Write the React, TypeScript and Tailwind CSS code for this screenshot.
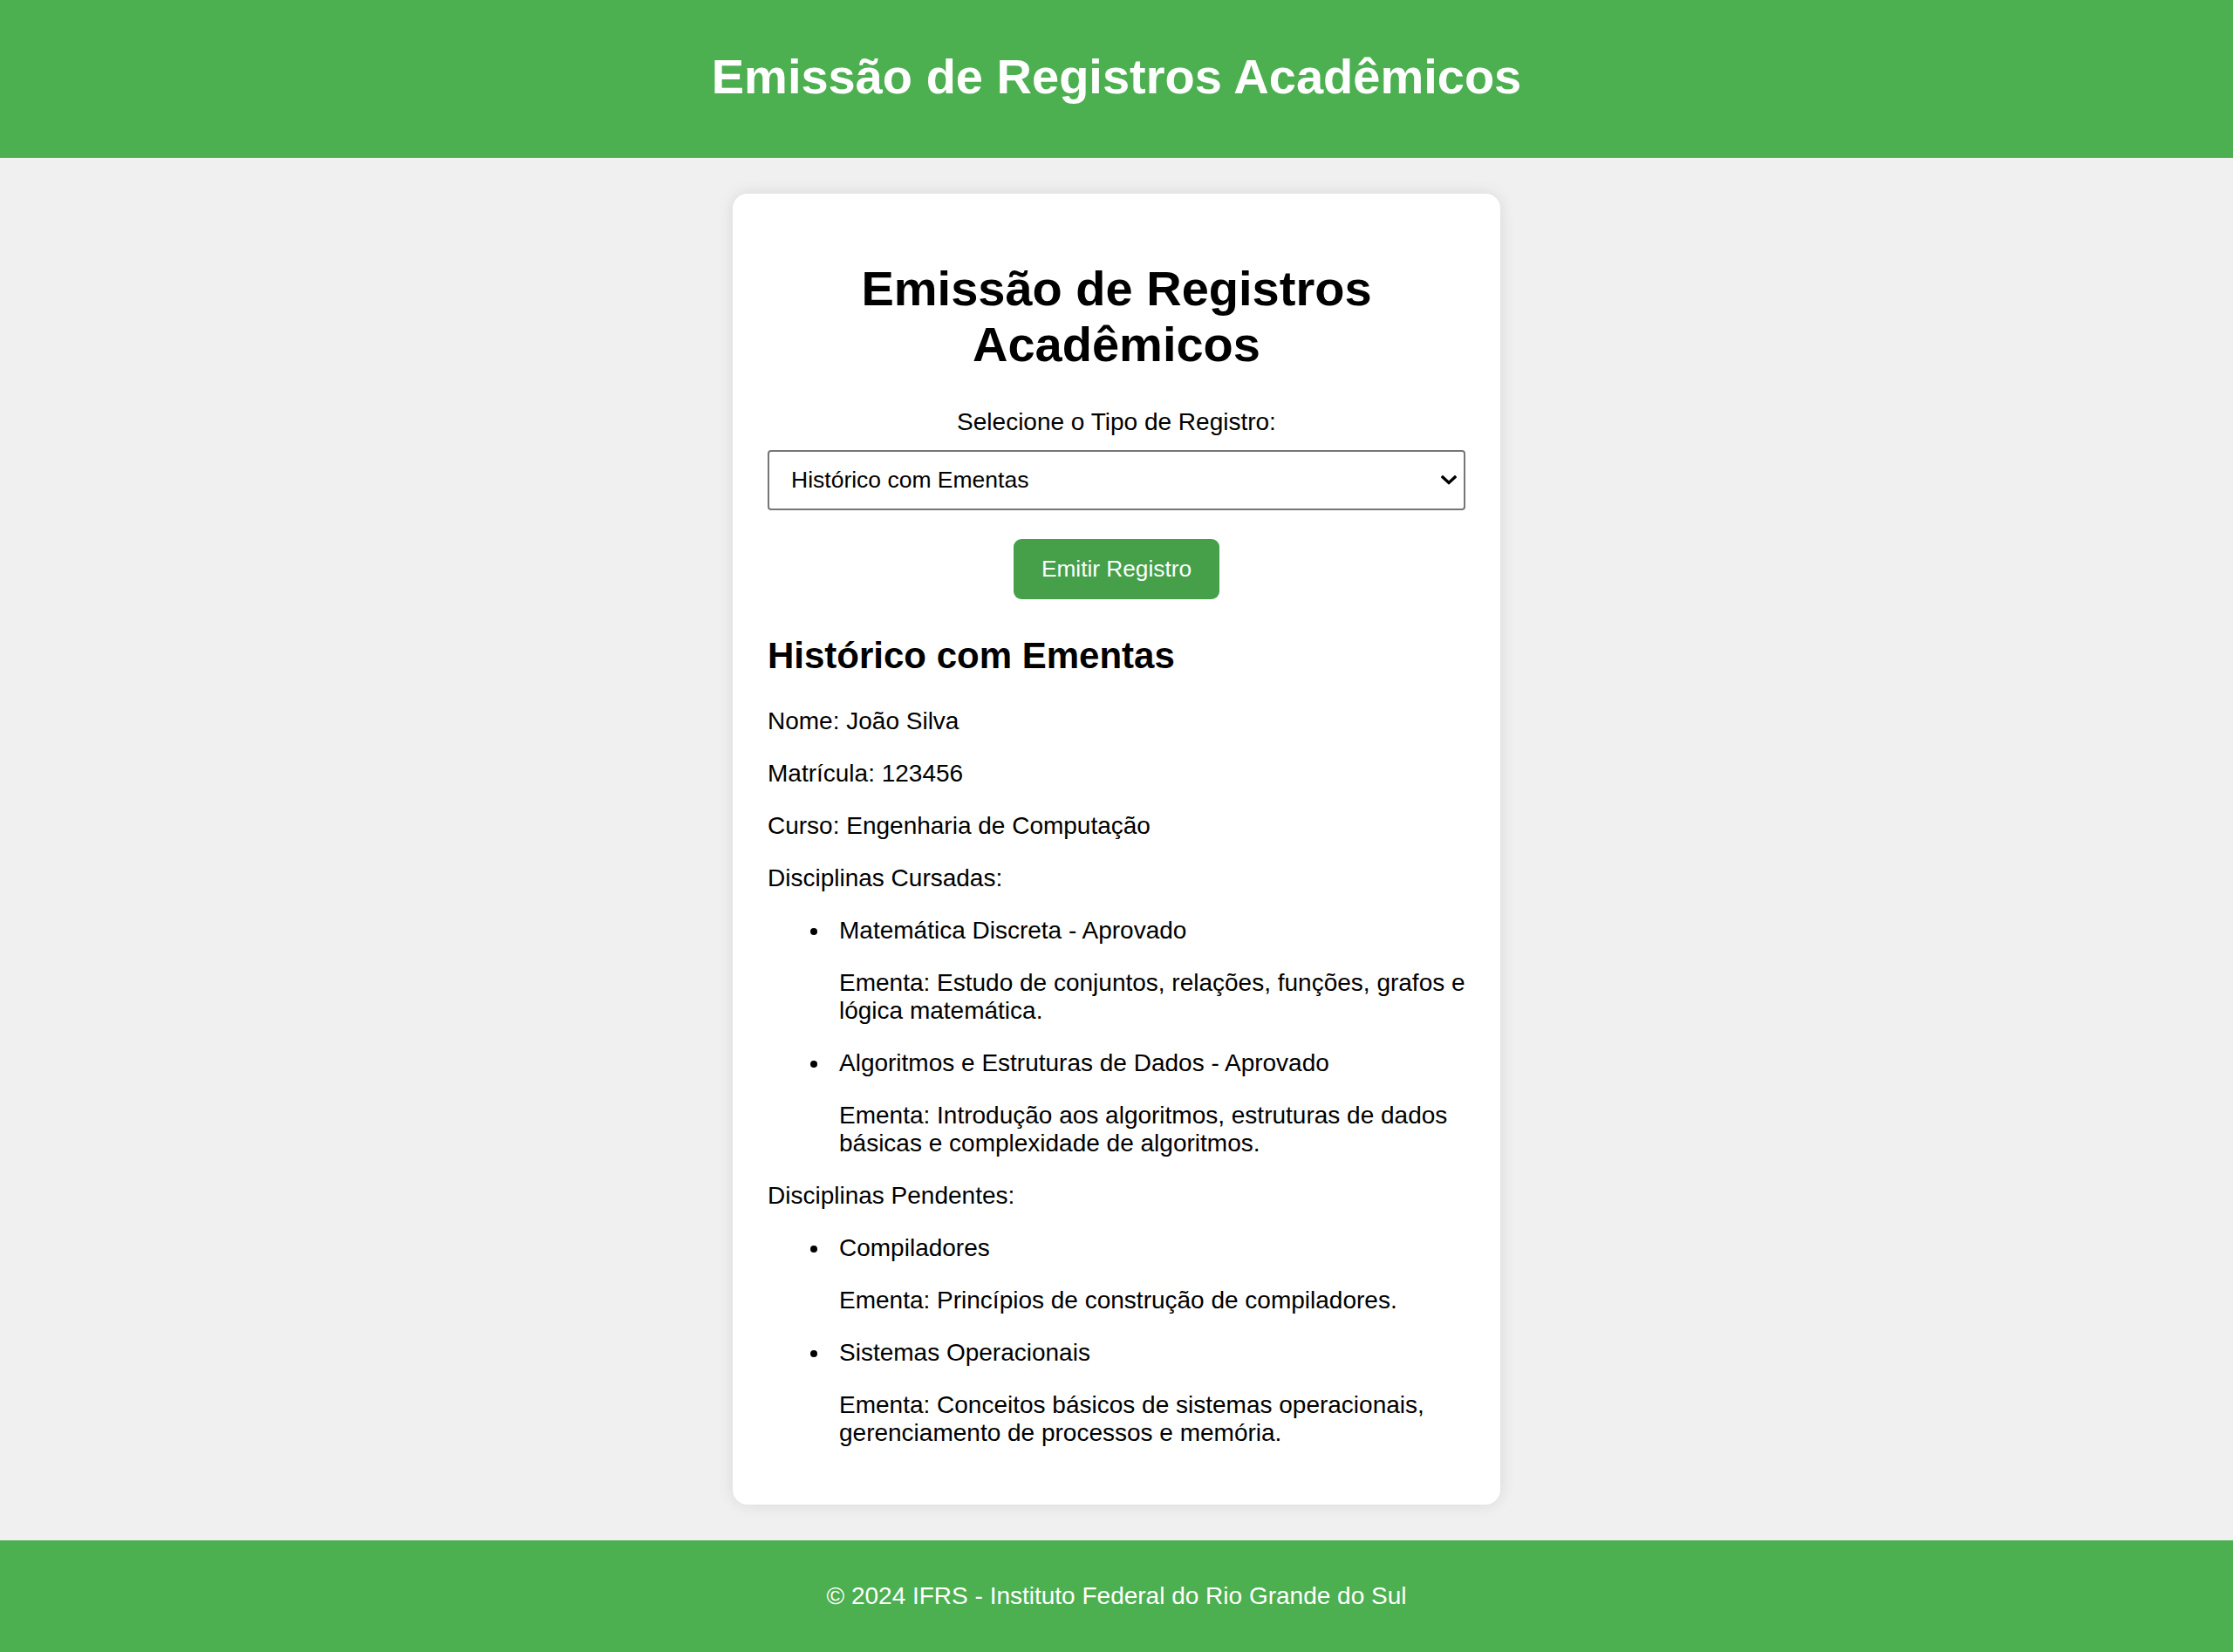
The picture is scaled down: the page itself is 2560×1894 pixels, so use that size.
import React from 'react';

const cursadas = [
    { nome: 'Matemática Discreta - Aprovado', ementa: 'Estudo de conjuntos, relações, funções, grafos e lógica matemática.' },
    { nome: 'Algoritmos e Estruturas de Dados - Aprovado', ementa: 'Introdução aos algoritmos, estruturas de dados básicas e complexidade de algoritmos.' },
];

const pendentes = [
    { nome: 'Compiladores', ementa: 'Princípios de construção de compiladores.' },
    { nome: 'Sistemas Operacionais', ementa: 'Conceitos básicos de sistemas operacionais, gerenciamento de processos e memória.' },
];

const DisciplinaList = ({ items }: { items: { nome: string; ementa: string }[] }) => (
    <ul className="my-[28px] pl-[82px]">
        {items.map((d) => (
            <li key={d.nome} className="relative leading-[32px]">
                {/* bullet */}
                <span className="absolute left-[-33px] top-[13px] h-[8px] w-[8px] rounded-full bg-black" />
                {d.nome}
                <p className="my-[28px]">Ementa: {d.ementa}</p>
            </li>
        ))}
    </ul>
);

export default function App() {
    const [tipo, setTipo] = React.useState('historico-ementas');

    return (
        <div className="min-h-screen bg-[#f0f0f0] font-['Liberation_Sans',Arial,sans-serif] text-[28px] text-black">
            {/* Header */}
            <header className="bg-[#4caf50] pt-[56px] pb-[61px] text-center text-white">
                <h1 className="text-[56px] font-bold leading-[64px]">Emissão de Registros Acadêmicos</h1>
            </header>

            <main className="py-[41px]">
                <div className="mx-auto w-[880px] rounded-[17px] bg-white px-[40px] pt-[40px] pb-[38px] shadow-[0_0_18px_rgba(0,0,0,0.1)]">
                    <h1 className="mt-[37px] mb-[41px] text-center text-[56px] font-bold leading-[64px]">
                        Emissão de Registros Acadêmicos
                    </h1>

                    <label htmlFor="tipo" className="block text-center leading-[32px]">
                        Selecione o Tipo de Registro:
                    </label>
                    <div className="relative mt-[16px]">
                        <select
                            id="tipo"
                            value={tipo}
                            onChange={(e) => setTipo(e.target.value)}
                            className="block h-[69px] w-full appearance-none rounded-[4px] border-2 border-[#767676] bg-white pl-[25px] pr-[60px] text-[26.5px] text-black outline-none"
                        >
                            <option value="historico-ementas">Histórico com Ementas</option>
                            <option value="historico">Histórico Escolar</option>
                            <option value="atestado">Atestado de Matrícula</option>
                        </select>
                        <svg
                            className="pointer-events-none absolute right-[10px] top-[29px]"
                            width="18"
                            height="11"
                            viewBox="0 0 18 11"
                            fill="none"
                        >
                            <polyline points="2,2 9,8.5 16,2" stroke="#000" strokeWidth="3.4" strokeLinecap="square" />
                        </svg>
                    </div>

                    <button className="mx-auto mt-[33px] block h-[69px] w-[236px] rounded-[9px] bg-[#45a049] text-[26.25px] text-white">
                        Emitir Registro
                    </button>

                    {/* Resultado */}
                    <h2 className="mt-[41px] mb-[35px] text-[42px] font-bold leading-[48px]">Histórico com Ementas</h2>
                    <p className="my-[28px] leading-[32px]">Nome: João Silva</p>
                    <p className="my-[28px] leading-[32px]">Matrícula: 123456</p>
                    <p className="my-[28px] leading-[32px]">Curso: Engenharia de Computação</p>
                    <p className="my-[28px] leading-[32px]">Disciplinas Cursadas:</p>
                    <DisciplinaList items={cursadas} />
                    <p className="my-[28px] leading-[32px]">Disciplinas Pendentes:</p>
                    <DisciplinaList items={pendentes} />
                </div>
            </main>

            <footer className="bg-[#4caf50] pt-[48px] pb-[49px] text-center leading-[32px] text-white">
                © 2024 IFRS - Instituto Federal do Rio Grande do Sul
            </footer>
        </div>
    );
}
